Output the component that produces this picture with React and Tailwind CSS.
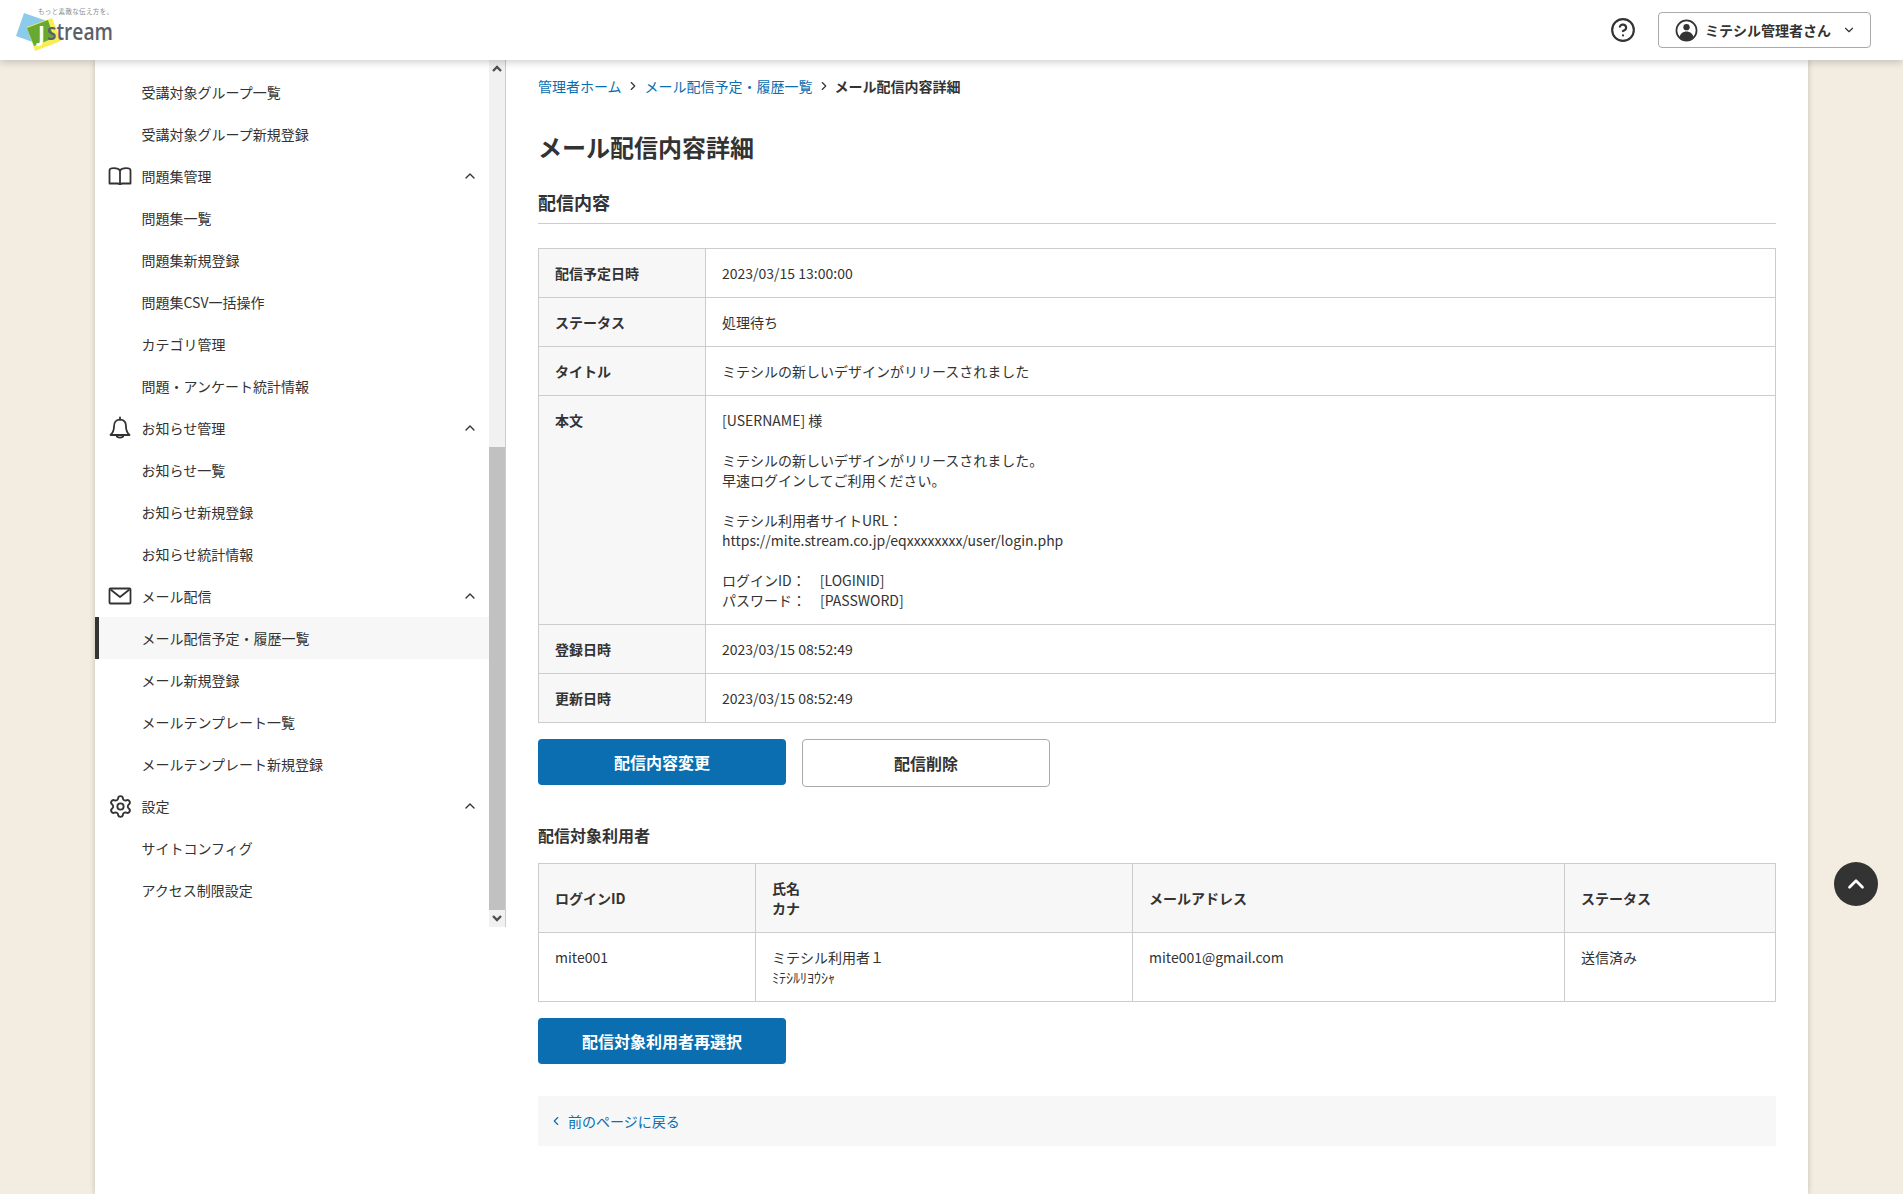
import React from "react";
import { ChevronUp, ChevronDown, ChevronRight, ChevronLeft, Settings, CircleHelp } from "lucide-react";

const jp = "font-['Noto_Sans_CJK_JP','Noto_Sans',sans-serif]";

function BookIcon() {
  return (
    <svg width="24" height="18" viewBox="0 0 24 18" fill="none" stroke="#333" strokeWidth="1.8" strokeLinejoin="round">
      <path d="M1.5 16.5V3.5C1.5 2 3 1.2 6 1.2s5 .8 6 2.3c1-1.5 3-2.3 6-2.3s4.500.8 4.500 2.300v13H14.500c-1 0-2 .2-2.500.8-.5-.6-1.500-.8-2.500-.8z" />
      <path d="M12 3.500v13.800" />
    </svg>
  );
}

function BellIcon() {
  return (
    <svg width="24" height="24" viewBox="0 0 24 24" fill="none" stroke="#333" strokeWidth="1.8" strokeLinejoin="round" strokeLinecap="round">
      <path d="M12 1.500v2.200" />
      <path d="M12 3.700c-4 0-6 3-6 6.800 0 4-1 6.200-3.500 8.500h19c-2.500-2.300-3.500-4.500-3.500-8.500 0-3.800-2-6.800-6-6.800z" />
      <path d="M8.500 19.500c.5 2.700 6.500 2.700 7 0" />
    </svg>
  );
}

function MailIcon() {
  return (
    <svg width="24" height="18" viewBox="0 0 24 18" fill="none" stroke="#333" strokeWidth="1.8" strokeLinejoin="round">
      <rect x="1.500" y="1.500" width="21" height="15" rx="1" />
      <path d="M2.500 2.500 12 10l9.500-7.500" />
    </svg>
  );
}

function UserIcon() {
  return (
    <svg width="23" height="23" viewBox="0 0 24 24">
      <circle cx="12" cy="12" r="10.500" fill="none" stroke="#333" strokeWidth="1.800" />
      <circle cx="12" cy="8.500" r="3.300" fill="#333" />
      <path d="M4.700 19c.8-3.800 3.800-6 7.300-6s6.500 2.200 7.300 6c-2 2-4.500 3-7.300 3s-5.300-1-7.300-3z" fill="#333" />
    </svg>
  );
}

function Logo() {
  return (
    <svg width="140" height="60" viewBox="0 0 140 60">
      <polygon points="24,13 47,21 38,44 16,36" fill="#8ccbea" />
      <polygon points="35,51 61,41 52,18 27,27" fill="#f7ee55" />
      <polygon points="27,28 48,20 54,38 34,46" fill="#6aa92f" />
      <text x="38" y="41" fontFamily="Open Sans, sans-serif" fontSize="21" fontWeight="700" fill="#fff">J</text>
      <text x="47" y="40" fontFamily="Open Sans, sans-serif" fontSize="23" fontWeight="600" fill="#5b5f6b" textLength="66" lengthAdjust="spacingAndGlyphs">stream</text>
      <text x="38" y="14" fontFamily="Noto Sans CJK JP, sans-serif" fontSize="6.500" fill="#8a8a8a" textLength="75">もっと素敵な伝え方を。</text>
    </svg>
  );
}

const menu = [
  { label: "受講対象グループ一覧" },
  { label: "受講対象グループ新規登録" },
  { label: "問題集管理", icon: <BookIcon />, head: true },
  { label: "問題集一覧" },
  { label: "問題集新規登録" },
  { label: "問題集CSV一括操作" },
  { label: "カテゴリ管理" },
  { label: "問題・アンケート統計情報" },
  { label: "お知らせ管理", icon: <BellIcon />, head: true },
  { label: "お知らせ一覧" },
  { label: "お知らせ新規登録" },
  { label: "お知らせ統計情報" },
  { label: "メール配信", icon: <MailIcon />, head: true },
  { label: "メール配信予定・履歴一覧", active: true },
  { label: "メール新規登録" },
  { label: "メールテンプレート一覧" },
  { label: "メールテンプレート新規登録" },
  { label: "設定", icon: <Settings size={25} color="#333" strokeWidth={1.8} />, head: true },
  { label: "サイトコンフィグ" },
  { label: "アクセス制限設定" },
];

function MenuRow({ item }) {
  return (
    <div className={`relative flex h-[42px] items-center pl-[46px] pr-[11px] text-[14px] text-[#333] ${item.active ? "bg-[#f7f7f7]" : ""}`}>
      {item.active && <span className="absolute left-0 top-0 h-full w-[4px] bg-[#333]" />}
      {item.icon && <span className="absolute left-[12px] top-0 flex h-full w-[26px] items-center justify-center">{item.icon}</span>}
      <span className="flex-1 pl-[0.5px]">{item.label}</span>
      {item.head && <ChevronUp size={16} color="#333" strokeWidth={2} />}
    </div>
  );
}

function Sidebar() {
  return (
    <aside className="flex h-[867px] w-[411px] shrink-0 border-r border-[#ccc]">
      <div className="w-[395px] pt-[11px]">
        {menu.map((item) => (
          <MenuRow key={item.label} item={item} />
        ))}
      </div>
      <div className="flex w-[16px] flex-col bg-[#f1f1f1]">
        <div className="flex h-[17px] items-center justify-center">
          <svg width="10" height="7" viewBox="0 0 10 7" fill="none" stroke="#505050" strokeWidth="2.400">
            <path d="M1 6l4-4 4 4" />
          </svg>
        </div>
        <div className="h-[370px]" />
        <div className="w-full flex-1 bg-[#c1c1c1]" />
        <div className="flex h-[17px] items-center justify-center">
          <svg width="10" height="7" viewBox="0 0 10 7" fill="none" stroke="#505050" strokeWidth="2.400">
            <path d="M1 1l4 4 4-4" />
          </svg>
        </div>
      </div>
    </aside>
  );
}

const th = "border border-[#ccc] bg-[#f7f7f7] px-[16px] py-[14px] text-left align-top font-bold";
const td = "border border-[#ccc] px-[16px] py-[14px] text-left align-top font-normal";

const info = [
  ["配信予定日時", "2023/03/15 13:00:00"],
  ["ステータス", "処理待ち"],
  ["タイトル", "ミテシルの新しいデザインがリリースされました"],
  [
    "本文",
    <>
      [USERNAME] 様<br />
      <br />
      ミテシルの新しいデザインがリリースされました。<br />
      早速ログインしてご利用ください。<br />
      <br />
      ミテシル利用者サイトURL：<br />
      https://mite.stream.co.jp/eqxxxxxxxx/user/login.php<br />
      <br />
      ログインID：　[LOGINID]<br />
      パスワード：　[PASSWORD]
    </>,
  ],
  ["登録日時", "2023/03/15 08:52:49"],
  ["更新日時", "2023/03/15 08:52:49"],
];

function Content() {
  return (
    <main className="w-[1238px] pt-[16px] text-[14px] leading-[20px] text-[#333]">
      <nav className="flex items-center">
        <a className="text-[#0a6eb0]">管理者ホーム</a>
        <ChevronRight size={14} color="#333" strokeWidth={2} className="mx-[4px]" />
        <a className="pl-[1px] text-[#0a6eb0]">メール配信予定・履歴一覧</a>
        <ChevronRight size={14} color="#333" strokeWidth={2} className="mx-[4px]" />
        <span className="font-bold">メール配信内容詳細</span>
      </nav>
      <h1 className="mt-[33px] text-[24px] font-bold leading-[36px]">メール配信内容詳細</h1>
      <h2 className="mt-[24px] border-b border-[#ccc] pb-[7px] text-[18px] font-bold leading-[27px]">配信内容</h2>
      <table className="mt-[24px] w-full table-fixed border-collapse">
        <colgroup>
          <col className="w-[167px]" />
          <col />
        </colgroup>
        <tbody>
          {info.map(([k, v]) => (
            <tr key={k}>
              <th className={th}>{k}</th>
              <td className={td}>{v}</td>
            </tr>
          ))}
        </tbody>
      </table>
      <div className="mt-[16px] flex items-start gap-[16px]">
        <button className="h-[46px] w-[248px] rounded-[4px] bg-[#0a6eb0] text-[16px] font-bold text-white">配信内容変更</button>
        <button className="h-[48px] w-[248px] rounded-[4px] border border-[#aaa] bg-white text-[16px] font-bold text-[#333]">配信削除</button>
      </div>
      <h3 className="mt-[36px] mb-[16px] text-[16px] font-bold leading-[24px]">配信対象利用者</h3>
      <table className="w-full table-fixed border-collapse">
        <colgroup>
          <col className="w-[217px]" />
          <col className="w-[377px]" />
          <col className="w-[432px]" />
          <col />
        </colgroup>
        <thead>
          <tr>
            <th className={`${th} !align-middle`}>ログインID</th>
            <th className={`${th} !align-middle`}>
              氏名
              <br />
              カナ
            </th>
            <th className={`${th} !align-middle`}>メールアドレス</th>
            <th className={`${th} !align-middle`}>ステータス</th>
          </tr>
        </thead>
        <tbody>
          <tr>
            <td className={td}>mite001</td>
            <td className={td}>
              ミテシル利用者１
              <br />
              ﾐﾃｼﾙﾘﾖｳｼｬ
            </td>
            <td className={td}>mite001@gmail.com</td>
            <td className={td}>送信済み</td>
          </tr>
        </tbody>
      </table>
      <button className="mt-[16px] block h-[46px] w-[248px] rounded-[4px] bg-[#0a6eb0] text-[16px] font-bold text-white">配信対象利用者再選択</button>
      <div className="mt-[32px] flex h-[50px] items-center bg-[#f7f7f7] pl-[11px] text-[#0a6eb0]">
        <ChevronLeft size={14} strokeWidth={2} className="mr-[5px]" />
        <a>前のページに戻る</a>
      </div>
    </main>
  );
}

export default function App() {
  return (
    <div className={`relative flex h-screen flex-col overflow-hidden bg-[#f3ece1] ${jp}`}>
      <header className="relative z-10 flex h-[60px] shrink-0 items-center justify-between bg-white pr-[32px] shadow-[0_2px_8px_rgba(0,0,0,0.2)]">
        <Logo />
        <div className="flex items-center gap-[22px]">
          <CircleHelp size={26} color="#333" strokeWidth={2} />
          <button className="flex h-[36px] w-[213px] items-center rounded-[4px] border border-[#aaa] bg-white pl-[16px] pr-[14px] text-[14px] font-bold text-[#333]">
            <UserIcon />
            <span className="ml-[7px] flex-1 text-left">ミテシル管理者さん</span>
            <ChevronDown size={14} color="#333" strokeWidth={2} />
          </button>
        </div>
      </header>
      <div className="mx-[95px] flex flex-1 bg-white shadow-[0_0_6px_rgba(0,0,0,0.2)]">
        <Sidebar />
        <div className="pl-[32px]">
          <Content />
        </div>
      </div>
      <button className="absolute left-[1834px] top-[862px] flex h-[44px] w-[44px] items-center justify-center rounded-full bg-[#333]">
        <ChevronUp size={26} color="#fff" strokeWidth={2.5} />
      </button>
    </div>
  );
}
